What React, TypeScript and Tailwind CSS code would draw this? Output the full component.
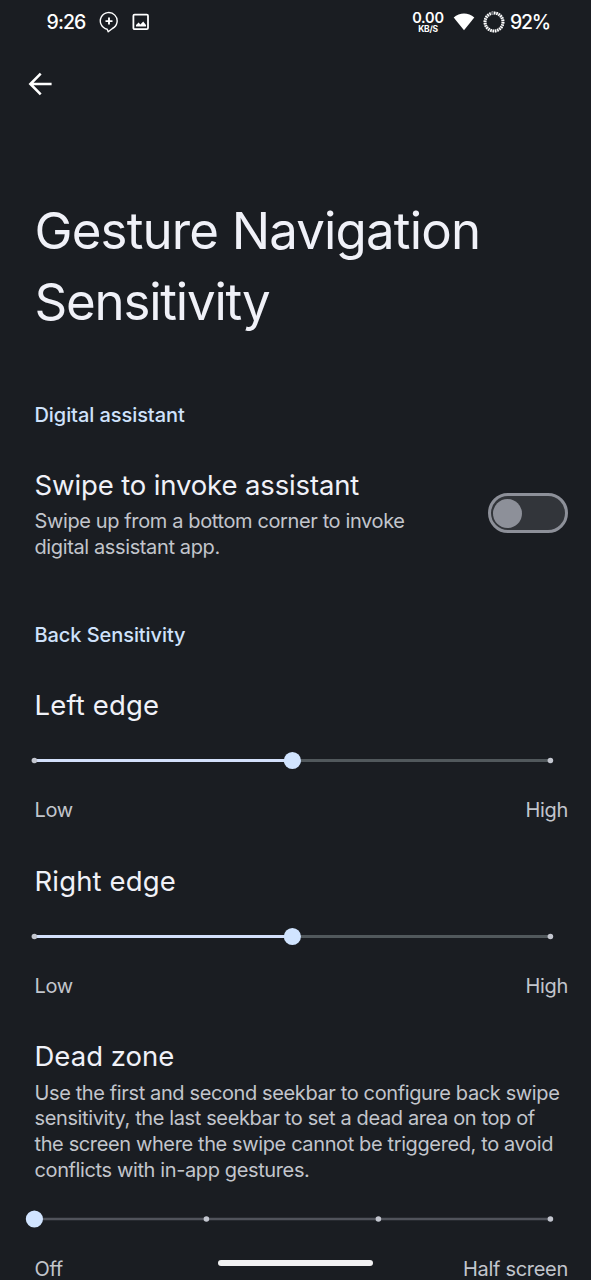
import type { ReactNode } from "react";

function StatusBar() {
  return (
    <header className="flex h-[44px] shrink-0 items-center justify-between pl-[46.5px] pr-[41px] text-white">
      <div className="flex items-center">
        <span className="w-[52.5px] text-[19.5px] font-medium leading-[26px] tracking-[-0.9px]">9:26</span>
        <svg className="h-[22px] w-[20px]" viewBox="0 0 20 22" fill="none" stroke="currentColor" strokeWidth="1.4">
          <path d="M8.2 18.2A8.4 8.4 0 1 1 13.4 17.5L9.2 20.8Z" strokeLinejoin="round" />
          <path d="M10 6.6v7M6.5 10.1h7" strokeWidth="1.9" />
        </svg>
        <svg className="ml-[13px] h-[18px] w-[18px]" viewBox="0 0 18 18" fill="none">
          <rect x="1.4" y="1.6" width="14.6" height="14.6" rx="1.2" stroke="currentColor" strokeWidth="1.8" />
          <path d="M4 13.4V12L6.6 9.6l1.8 2 2.8-3.2 2.8 3.6v1.4Z" fill="currentColor" />
        </svg>
      </div>
      <div className="flex items-center">
        <div className="flex w-[32px] flex-col items-center pt-px">
          <span className="text-[14.5px] font-semibold leading-[13px] tracking-[-0.2px]">0.00</span>
          <span className="text-[8.5px] font-bold leading-[10px] tracking-[-0.3px]">KB/S</span>
        </div>
        <svg className="ml-[9px] h-[18px] w-[22px]" viewBox="0 0 22 18" fill="currentColor">
          <path d="M.7 4.4C6.6-.9 15.4-.9 21.3 4.4L11 17.2Z" />
        </svg>
        <svg className="ml-[8px] h-[22px] w-[22px]" viewBox="0 0 22 22" fill="none" strokeWidth="3">
          <circle cx="11" cy="11" r="9" stroke="#55585d" />
          <circle cx="11" cy="11" r="9" stroke="currentColor" pathLength="100" strokeDasharray="2.6 1.567" transform="rotate(-90 11 11)" />
          <path d="M7.9 2.6A9 9 0 0 1 11 2" stroke="#6c6f74" />
        </svg>
        <span className="ml-[5px] w-[40px] text-[19.5px] font-medium leading-[26px] tracking-[-1.3px]">92%</span>
      </div>
    </header>
  );
}

function SectionLabel({ children }: { children: ReactNode }) {
  return <h2 className="text-[20px] font-medium leading-[26px] tracking-[-0.07px] text-[#cfe2fb]">{children}</h2>;
}

function Summary({ lines }: { lines: string[] }) {
  return (
    <p className="whitespace-nowrap text-[20px] leading-[25.6px] tracking-[-0.38px] text-[#c2c5cc]">
      {lines.map((line) => (
        <span key={line} className="block">
          {line}
        </span>
      ))}
    </p>
  );
}

function Slider({ value, steps, thin }: { value: number; steps: number; thin?: boolean }) {
  const left = 9.4;
  const width = 516;
  const x = left + (width * value) / steps;
  const y = thin ? 10 : 10.5;
  return (
    <svg className="-ml-[10px] block h-[20px] w-[540px]" viewBox="0 0 540 20">
      <line x1={left} x2={left + width} y1={y} y2={y} stroke={thin ? "#50535b" : "#51585c"} strokeWidth={thin ? 2.4 : 3} />
      <line x1={left} x2={x} y1={y} y2={y} stroke="#d3e0fb" strokeWidth="3" />
      {Array.from({ length: thin ? steps + 1 : 2 }, (_, i) => (
        <circle key={i} cx={left + (width * i) / (thin ? steps : 1)} cy={y} r="2.8" fill="#c3c6cf" />
      ))}
      <circle cx={x} cy={y} r="8.6" fill="#d1e4ff" />
    </svg>
  );
}

function RangeLabels({ low, high }: { low: string; high: string }) {
  return (
    <div className="flex justify-between text-[20px] leading-[26px] tracking-[-0.3px] text-[#c2c5cc]">
      <span>{low}</span>
      <span>{high}</span>
    </div>
  );
}

function EdgeSetting({ title }: { title: string }) {
  return (
    <div className="h-[175.7px]">
      <h3 className="text-[27.5px] leading-[36px] tracking-[0.15px]">{title}</h3>
      <div className="mt-[27.3px]">
        <Slider value={1} steps={2} />
      </div>
      <div className="mt-[26.7px]">
        <RangeLabels low="Low" high="High" />
      </div>
    </div>
  );
}

export default function App() {
  return (
    <div className="relative flex h-[1280px] w-[591px] flex-col overflow-hidden bg-[#1a1d22] font-['Inter',sans-serif] text-[#f0f1f8]">
      <StatusBar />
      <nav className="flex h-[80px] shrink-0 items-center pl-[28px]">
        <svg className="h-[26px] w-[26px]" viewBox="0 0 26 26" fill="none" stroke="#fff" strokeWidth="2.6">
          <path d="M23.6 13H3M12.7 2.7 2.4 13l10.3 10.3" />
        </svg>
      </nav>
      <main className="flex flex-col pl-[34.5px] pr-[23px] pt-[71px]">
        <h1 className="text-[51px] leading-[71px]">
          <span className="block whitespace-nowrap tracking-[-0.85px]">Gesture Navigation</span>
          <span className="block tracking-[-1.2px]">Sensitivity</span>
        </h1>
        <section className="mt-[65px]">
          <SectionLabel>Digital assistant</SectionLabel>
          <div className="mt-[39px] flex h-[92px] items-center justify-between">
            <div className="self-start">
              <h3 className="whitespace-nowrap text-[27.5px] leading-[36px] tracking-[-0.13px]">Swipe to invoke assistant</h3>
              <div className="mt-[6.4px]">
                <Summary lines={["Swipe up from a bottom corner to invoke", "digital assistant app."]} />
              </div>
            </div>
            <button role="switch" aria-checked="false" className="flex h-[40px] w-[80px] items-center rounded-full border-[3px] border-[#8d9099] bg-[#32353a] pl-[2px]">
              <span className="h-[29px] w-[29px] rounded-full bg-[#8d9099]" />
            </button>
          </div>
        </section>
        <section className="mt-[63px]">
          <SectionLabel>Back Sensitivity</SectionLabel>
          <div className="mt-[39px]">
            <EdgeSetting title="Left edge" />
            <EdgeSetting title="Right edge" />
            <h3 className="text-[27.5px] leading-[36px] tracking-[0.02px]">Dead zone</h3>
            <div className="mt-[6.4px]">
              <Summary
                lines={[
                  "Use the first and second seekbar to configure back swipe",
                  "sensitivity, the last seekbar to set a dead area on top of",
                  "the screen where the swipe cannot be triggered, to avoid",
                  "conflicts with in-app gestures.",
                ]}
              />
            </div>
            <div className="mb-[27px] mt-[25.6px]">
              <Slider value={0} steps={3} thin />
            </div>
            <RangeLabels low="Off" high="Half screen" />
          </div>
        </section>
      </main>
      <div className="absolute left-[218px] top-[1260px] h-[6px] w-[155px] rounded-full bg-[#f1f1f2]" />
    </div>
  );
}
